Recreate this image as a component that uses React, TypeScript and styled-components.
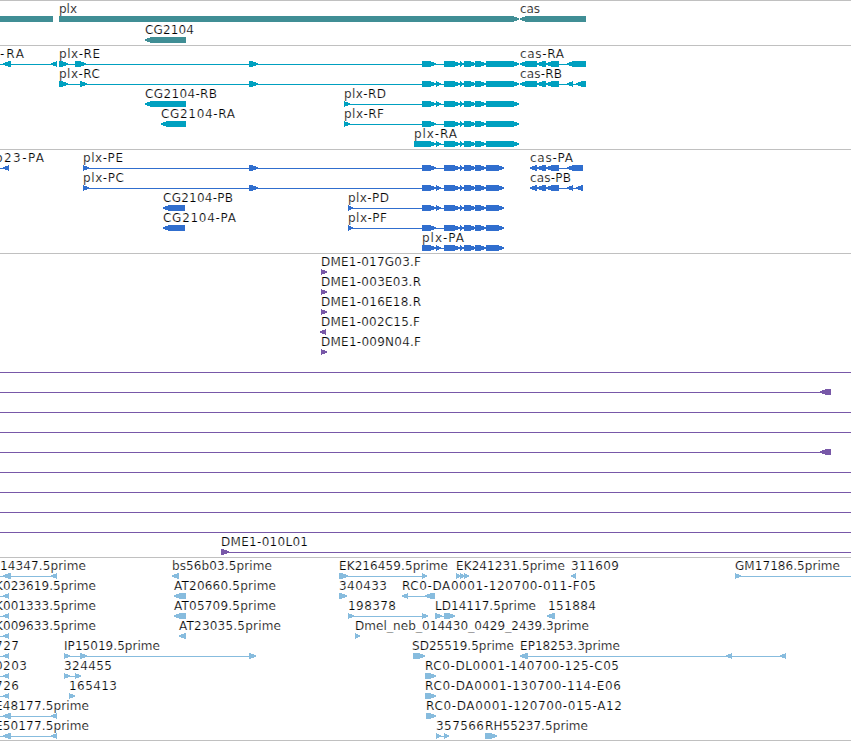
import styled, {createGlobalStyle} from "styled-components";
//styled-components
const GlobalStyle = createGlobalStyle`
	body{
		margin: 0;
		background-color: #ffffff;
		overflow: hidden;
	}
`;
const Browser = styled.main`
	display: flex;
	flex-direction: column;
	width: 851px;
	height: 741px;
	box-sizing: border-box;
	overflow: hidden;
	background-color: #ffffff;
	border-bottom: 1px solid #c0c0c0;
`;
const TrackPanel = styled.section<{$color: string; $gap: number}>`
	display: flex;
	flex-direction: column;
	flex-shrink: 0;
	padding-bottom: ${props => props.$gap}px;
	border-top: 1px solid #c0c0c0;
	color: ${props => props.$color};
`;
const Lane = styled.svg<{$height: number}>`
	display: block;
	flex-shrink: 0;
	width: 851px;
	height: ${props => props.$height}px;
	overflow: visible;
`;
//the thin white stroke keeps the letters light
const Label = styled.text`
	fill: #000000;
	stroke: #ffffff;
	stroke-width: 0.2px;
	font-family: "DejaVu Sans", sans-serif;
	font-size: 12px;
`;
const Intron = styled.rect`
	fill: currentColor;
`;
const Exon = styled.polygon`
	fill: currentColor;
	shape-rendering: crispEdges;
`;
//interfaces
type Span = [number, number];
interface IFeature{
	name?: string;
	text?: Span;
	line?: Span;
	exons?: Span[];
	left?: boolean;
}
interface ITrack{
	id: string;
	color: string;
	laneHeight: number;
	gap: number;
	lanes: IFeature[][];
}
//helpers
const fwd = (name: string, text: Span, exons: Span[], line?: Span): IFeature => ({name, text, exons, line});
const rev = (name: string, text: Span, exons: Span[], line?: Span): IFeature => ({name, text, exons, line, left: true});
const fullLine: IFeature = {line: [0, 851]};
const arrowLine: IFeature = {line: [0, 822], exons: [[820, 831]], left: true};

const core: Span[] = [[444, 460], [460, 464], [464, 476], [475, 486]];
const tail: Span[] = [[422, 436], ...core];
const tailExtra: Span[] = [[422, 436], [436, 441], ...core];
const casStart: Span[] = [[537, 546], [546, 559]];

const tracks: ITrack[] = [
	{
		id: "gene",
		color: "#408e95",
		laneHeight: 21,
		gap: 2,
		lanes: [
			[
				{exons: [[-40, 53]], left: true},
				fwd("plx", [59, 77], [[59, 519]]),
				rev("cas", [520, 540], [[520, 586]]),
			],
			[rev("CG2104", [145, 194], [[145, 186]])],
		],
	},
	{
		id: "transcript",
		color: "#00a0c0",
		laneHeight: 20,
		gap: 3,
		lanes: [
			[
				rev("-RA", [0, 24], [[3, 11], [51, 57]], [0, 54]),
				fwd("plx-RE", [59, 100], [[59, 68], [75, 86], [249, 258], ...tail, [486, 519]], [59, 517]),
				rev("cas-RA", [520, 564], [[520, 537], ...casStart, [567, 586]], [523, 586]),
			],
			[
				fwd("plx-RC", [59, 100], [[59, 68], [80, 87], [249, 258], ...tailExtra, [486, 519]], [59, 517]),
				rev("cas-RB", [520, 562], [[520, 537], ...casStart, [567, 573], [576, 586]], [523, 586]),
			],
			[
				rev("CG2104-RB", [145, 217], [[145, 186]]),
				fwd("plx-RD", [344, 386], [[344, 350], ...tailExtra, [486, 519]], [344, 517]),
			],
			[
				rev("CG2104-RA", [161, 235], [[161, 186]]),
				fwd("plx-RF", [344, 384], [[344, 350], ...tail, [486, 519]], [344, 517]),
			],
			[fwd("plx-RA", [414, 457], [[414, 436], [436, 441], ...core, [486, 519]], [414, 517])],
		],
	},
	{
		id: "cds",
		color: "#306ece",
		laneHeight: 20,
		gap: 3,
		lanes: [
			[
				rev("b23-PA", [-5, 44], [[3, 9]], [0, 6]),
				fwd("plx-PE", [83, 123], [[83, 89], [249, 258], ...tail, [486, 504]], [83, 502]),
				rev("cas-PA", [530, 573], [[530, 537], ...casStart, [567, 583]], [533, 583]),
			],
			[
				fwd("plx-PC", [83, 124], [[83, 89], [249, 258], ...tailExtra, [486, 504]], [83, 502]),
				rev("cas-PB", [530, 571], [[530, 537], ...casStart, [567, 573], [576, 583]], [533, 581]),
			],
			[
				rev("CG2104-PB", [163, 233], [[163, 185]]),
				fwd("plx-PD", [348, 389], [[348, 353], ...tailExtra, [486, 504]], [348, 502]),
			],
			[
				rev("CG2104-PA", [163, 236], [[163, 185]]),
				fwd("plx-PF", [348, 387], [[348, 353], ...tail, [486, 504]], [348, 502]),
			],
			[fwd("plx-PA", [422, 464], [...tailExtra, [486, 504]], [422, 502])],
		],
	},
	{
		id: "bac",
		color: "#7858a8",
		laneHeight: 20,
		gap: 3,
		lanes: [
			[fwd("DME1-017G03.F", [321, 421], [[321, 327]])],
			[fwd("DME1-003E03.R", [321, 421], [[321, 327]])],
			[fwd("DME1-016E18.R", [321, 421], [[321, 327]])],
			[rev("DME1-002C15.F", [321, 420], [[320, 326]])],
			[fwd("DME1-009N04.F", [321, 421], [[321, 327]])],
			[fullLine],
			[arrowLine],
			[fullLine],
			[fullLine],
			[arrowLine],
			[fullLine],
			[fullLine],
			[fullLine],
			[fullLine],
			[fwd("DME1-010L01", [221, 308], [[221, 229]], [221, 851])],
		],
	},
	{
		id: "est",
		color: "#87bcde",
		laneHeight: 20,
		gap: 2,
		lanes: [
			[
				rev("14347.5prime", [0, 86], [[3, 11], [51, 57]], [0, 54]),
				rev("bs56b03.5prime", [172, 272], [[172, 179]]),
				fwd("EK216459.5prime", [339, 448], [[339, 348], [422, 427]], [339, 425]),
				fwd("EK241231.5prime", [456, 565], [[456, 461], [460, 465], [464, 469]]),
				rev("311609", [571, 619], [[571, 576]]),
				fwd("GM17186.5prime", [735, 840], [[735, 741]], [735, 851]),
			],
			[
				rev("K023619.5prime", [-5, 96], [[3, 9]], [0, 6]),
				rev("AT20660.5prime", [174, 276], [[174, 186]]),
				fwd("340433", [339, 387], [[339, 347]]),
				rev("RC0-DA0001-120700-011-F05", [402, 596], [[402, 408], [425, 435]], [405, 435]),
			],
			[
				rev("K001333.5prime", [-5, 96], [[3, 9]], [0, 6]),
				rev("AT05709.5prime", [174, 276], [[174, 186]]),
				fwd("198378", [348, 396], [[348, 354], [422, 428]], [348, 426]),
				fwd("LD14117.5prime", [435, 536], [[435, 442], [444, 455]], [435, 453]),
				rev("151884", [548, 596], [[547, 555]]),
			],
			[
				rev("K009633.5prime", [-5, 96], [[3, 9]], [0, 6]),
				rev("AT23035.5prime", [179, 281], [[179, 186]]),
				fwd("Dmel_neb_014430_0429_2439.3prime", [355, 589], [[355, 360]]),
			],
			[
				rev("727", [-5, 19], [[3, 9]], [0, 6]),
				fwd("IP15019.5prime", [64, 160], [[64, 70], [80, 87], [249, 256]], [64, 254]),
				fwd("SD25519.5prime", [412, 514], [[413, 425]]),
				rev("EP18253.3prime", [520, 620], [[520, 528], [726, 732], [780, 786]], [523, 783]),
			],
			[
				rev("0203", [-5, 27], [[3, 9]], [0, 6]),
				fwd("324455", [64, 112], [[64, 70], [75, 81]], [64, 79]),
				fwd("RC0-DL0001-140700-125-C05", [425, 619], [[425, 436]]),
			],
			[
				rev("726", [-5, 19], [[3, 9]], [0, 6]),
				fwd("165413", [69, 117], [[69, 75]]),
				fwd("RC0-DA0001-130700-114-E06", [425, 621], [[425, 436]]),
			],
			[
				rev("E48177.5prime", [-5, 89], [[3, 11], [51, 57]], [0, 54]),
				fwd("RC0-DA0001-120700-015-A12", [426, 622], [[426, 436]]),
			],
			[
				rev("E50177.5prime", [-5, 89], [[3, 11], [51, 57]], [0, 54]),
				fwd("357566", [436, 484], [[436, 441], [444, 449]], [436, 447]),
				fwd("RH55237.5prime", [485, 588], [[485, 497]]),
			],
		],
	},
];

//box with a pointed end, six pixels high
function exonPoints([from, to]: Span, left?: boolean){
	const head = Math.min(6, to - from);
	if(left){
		const neck = from + head;
		return `${to},15 ${neck},15 ${from},17.5 ${from},18.5 ${neck},21 ${to},21`;
	}
	const neck = to - head;
	return `${from},15 ${neck},15 ${to},17.5 ${to},18.5 ${neck},21 ${from},21`;
}

function Feature({name, text, line, exons, left}: IFeature){
	return (
		<g>
			{line && <Intron x={line[0]} y={18} width={line[1] - line[0]} height={1}/>}
			{exons?.map((exon) => <Exon key={exon[0]} points={exonPoints(exon, left)}/>)}
			{name && text && (
				<Label x={text[0]} y={12} textLength={text[1] - text[0]}>{name}</Label>
			)}
		</g>
	);
}

function Track({color, laneHeight, gap, lanes}: ITrack){
	return (
		<TrackPanel $color={color} $gap={gap}>
			{lanes.map((lane, i) => (
				<Lane key={i} $height={laneHeight}>
					{lane.map((feature, j) => <Feature key={j} {...feature}/>)}
				</Lane>
			))}
		</TrackPanel>
	);
}

function App(){
	return (
		<Browser>
			<GlobalStyle/>
			{tracks.map((track) => <Track key={track.id} {...track}/>)}
		</Browser>
	);
}
export default App;
